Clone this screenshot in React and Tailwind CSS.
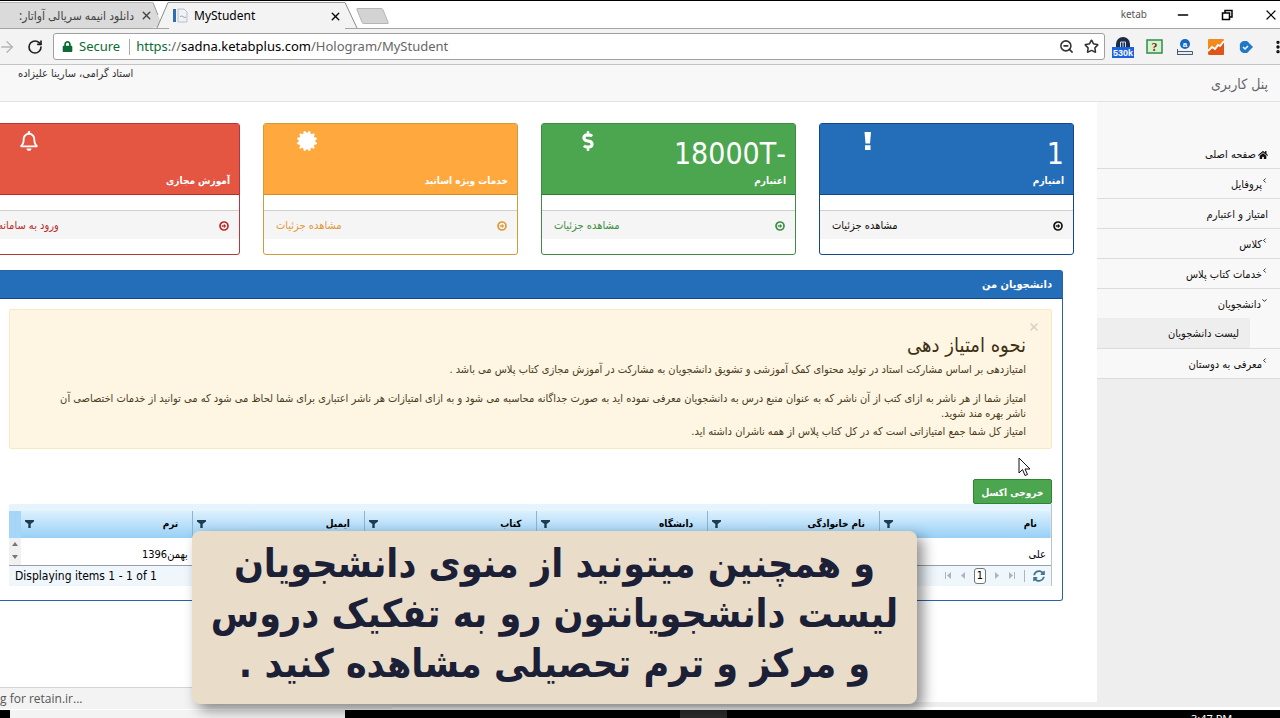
import { useState } from "react";
import { FaCertificate, FaDollarSign, FaHome, FaLock, FaRegBell, FaSyncAlt } from "react-icons/fa";
import { ArrowRight, ChevronDown, ChevronLeft, EllipsisVertical, Minus, RotateCw, Star, X, ZoomOut } from "lucide-react";

function Exclamation({ className }) {
  return (
    <svg width="20" height="20" viewBox="0 0 20 20" fill="currentColor" className={className}>
      <path d="M6.500 1h6.500l-1 11.500h-4.500z M7 14.200h5.500v4.800H7z" />
    </svg>
  );
}

function CircleArrow() {
  return (
    <svg width="10" height="10" viewBox="0 0 10 10" fill="none" stroke="currentColor">
      <circle cx="5" cy="5" r="4" strokeWidth="1.700" />
      <path d="M2.800 5h2" strokeWidth="1.500" />
      <path d="M4.800 2.800L7.200 5 4.800 7.200z" fill="currentColor" stroke="none" />
    </svg>
  );
}

const cards = [
  {
    value: "1",
    title: "امتیازم",
    link: "مشاهده جزئیات",
    icon: Exclamation,
    head: "bg-[#246eb9] border-[#12498b] pl-[38px]",
    box: "border-[#12498b]",
    text: "text-[#111111]",
  },
  {
    value: "-18000T",
    title: "اعتبارم",
    link: "مشاهده جزئیات",
    icon: FaDollarSign,
    head: "bg-[#4ca64f] border-[#2c7d32] pl-[36px]",
    box: "border-[#3d8c42]",
    text: "text-[#3b8f3f]",
  },
  {
    value: "",
    title: "خدمات ویژه اساتید",
    link: "مشاهده جزئیات",
    icon: FaCertificate,
    head: "bg-[#fea83e] border-[#dc8a1c] pl-[33px]",
    box: "border-[#cf9c3c]",
    text: "text-[#e09a3a]",
  },
  {
    value: "",
    title: "آموزش مجازی",
    link: "ورود به سامانه",
    icon: FaRegBell,
    head: "bg-[#e45542] border-[#c22a20] pl-[33px]",
    box: "border-[#b8383a]",
    text: "text-[#b92a26]",
  },
];

const columns = ["نام", "نام خانوادگی", "دانشگاه", "کتاب", "ایمیل", "ترم"];
const student = ["علی", "", "", "", "", "بهمن1396"];

function TabStrip() {
  return (
    <div className="flex h-[29px] items-end border-t border-black border-b border-b-[#a5a5a5] bg-white">
      <div className="flex h-[26px] w-[153px] items-center justify-end gap-[6px] border-t border-[#b5b5b5] bg-[#dadada]">
        <span dir="rtl" className="whitespace-nowrap text-[12px] text-[#444]">
          دانلود انیمه سریالی آواتار:
        </span>
        <button type="button" aria-label="Close tab">
          <X size={13} strokeWidth={2.500} className="text-[#444]" />
        </button>
      </div>
      <svg width="16" height="26" viewBox="0 0 16 26">
        <path d="M0 0.5 L10 25.5 H0 Z" fill="#dadada" />
        <path d="M0 0.5 L5 13" stroke="#999" fill="none" />
        <path d="M4 26 L15 0.5 H16 V26 Z" fill="#f3f3f3" />
        <path d="M4 26 L15 0.5 H16" stroke="#8a8a8a" fill="none" />
      </svg>
      <div className="-mb-px flex h-[27px] w-[176px] items-center border-t border-[#999] bg-[#f3f3f3] pr-[3px]">
        <svg width="16" height="16" viewBox="0 0 16 16" className="ml-[4px]">
          <rect x="0" y="1" width="3" height="13" fill="#2f6fb0" />
          <path d="M5 1h6l3 3v10H5z" fill="#eef1f5" stroke="#b8c0cb" />
          <path d="M7 9c2-3 4 2 6 0" stroke="#8ea0b4" fill="none" />
        </svg>
        <span className="ml-[5px] grow text-[12px] text-black">MyStudent</span>
        <button type="button" aria-label="Close tab">
          <X size={13} strokeWidth={2.500} className="text-black" />
        </button>
      </div>
      <svg width="14" height="26" viewBox="0 0 14 26">
        <path d="M0 0.5 L12 26 H0 Z" fill="#f3f3f3" />
        <path d="M0 0.5 L12 26" stroke="#8a8a8a" fill="none" />
      </svg>
      <button
        type="button"
        aria-label="New tab"
        className="mb-[4px] h-[16px] w-[27px] skew-x-[22deg] rounded-[2px] border border-[#b5b5b5] bg-[#d3d3d3]"
      />
      <div className="flex h-[27px] grow items-center justify-end gap-[28px] pr-[2px]">
        <span className="text-[10px] text-[#555]">ketab</span>
        <button type="button" aria-label="Minimize">
          <Minus size={16} strokeWidth={2} />
        </button>
        <button type="button" aria-label="Restore">
          <svg width="16" height="16" viewBox="0 0 16 16" fill="none" stroke="#000" strokeWidth="1.5">
            <path d="M3.5 6h7v6.500h-7z M6 6V3.500h7V10h-2.500" />
          </svg>
        </button>
        <button type="button" aria-label="Close" className="-mr-[1px]">
          <X size={16} strokeWidth={1.800} />
        </button>
      </div>
    </div>
  );
}

function Toolbar() {
  return (
    <div className="flex h-[36px] items-center border-b border-[#c4c4c4] bg-[#f3f3f3]">
      <button type="button" aria-label="Forward" className="-ml-[2px] text-[#b5b5b5]">
        <ArrowRight size={18} strokeWidth={1.800} />
      </button>
      <button type="button" aria-label="Reload" className="ml-[11px]">
        <RotateCw size={16} strokeWidth={2.500} className="text-[#222]" />
      </button>
      <div className="ml-[10px] flex h-[27px] grow items-center rounded-[3px] border border-[#a0a0a0] bg-white px-[8px] text-[13px]">
        <FaLock size={11} className="text-[#0b6b33]" />
        <span className="ml-[6px] text-[#0b6b33]">Secure</span>
        <span className="mr-[6px] ml-[9px] h-[16px] w-px bg-[#aaa]" />
        <span className="grow whitespace-nowrap text-[#666]">
          <span className="text-[#0b6b33]">https</span>://
          <span className="text-black">sadna.ketabplus.com</span>/Hologram/MyStudent
        </span>
        <button type="button" aria-label="Zoom">
          <ZoomOut size={15} strokeWidth={2.500} className="text-[#333]" />
        </button>
        <button type="button" aria-label="Bookmark" className="-mr-[3px] ml-[10px]">
          <Star size={15} strokeWidth={2.500} className="text-[#333]" />
        </button>
      </div>
      <div className="flex items-center gap-[12px] pl-[7px]">
        <svg width="22" height="22" viewBox="0 0 22 22">
          <path d="M4 11V8a7 7 0 0 1 14 0v3z" fill="#1c2c46" />
          <path d="M8.500 11V6h5v5 M11 6v5" stroke="#cfd8e6" fill="none" />
          <rect x="0" y="11" width="22" height="11" fill="#1b63de" />
          <text x="11" y="20" fontSize="9" fill="#fff" textAnchor="middle" fontWeight="bold" fontFamily="Liberation Sans, sans-serif">
            530k
          </text>
        </svg>
        <svg width="17" height="15" viewBox="0 0 17 15">
          <rect x="1" y="1" width="15" height="13" fill="#d6f3cf" stroke="#2f8d4b" strokeWidth="1.500" />
          <text x="8.500" y="12" fontSize="12" fill="#7b2a1a" textAnchor="middle" fontWeight="bold" fontFamily="Liberation Serif, serif">
            ?
          </text>
        </svg>
        <svg width="18" height="18" viewBox="0 0 18 18" className="ml-[1px]">
          <circle cx="9" cy="6" r="5" fill="#1667c1" />
          <text x="9" y="9" fontSize="8" fill="#fff" textAnchor="middle" fontWeight="bold" fontFamily="Liberation Sans, sans-serif">
            a
          </text>
          <path d="M1.500 11v6 M1.500 13.500h15v3h-15" stroke="#4a5a70" fill="#e8edf3" />
        </svg>
        <svg width="16" height="16" viewBox="0 0 16 16" className="ml-[2px]">
          <rect width="16" height="16" rx="1" fill="#f28a1c" />
          <path d="M0 13l4-4 3 2 4-4 5-5v13a1 1 0 0 1-1 1H1z" fill="#e2531b" />
          <path d="M0 12l4-4 3 2 3-4 2 1 4-5" stroke="#fff" strokeWidth="1.800" fill="none" />
        </svg>
        <svg width="15" height="12" viewBox="0 0 15 12" className="ml-[3px]">
          <path d="M1 6a5 5 0 0 1 9-4l4 4-4 4a5 5 0 0 1-9-4z" fill="#1f78c8" />
          <path d="M4 6l2 2 3-3" stroke="#fff" strokeWidth="1.500" fill="none" />
        </svg>
        <button type="button" aria-label="Menu" className="-mr-[6px] ml-[4px]">
          <EllipsisVertical size={16} strokeWidth={3} />
        </button>
      </div>
    </div>
  );
}

function SideItem({ children, icon }) {
  return (
    <li className="border-b border-[#dcdcdc] bg-[#f8f8f8]">
      <a href="#" className="flex h-[29px] items-center pt-[3px] pr-[12px]">
        {icon}
        <span>{children}</span>
      </a>
    </li>
  );
}

function Sidebar() {
  const left = <ChevronLeft size={7} strokeWidth={3} className="-ml-[1px] mb-[9px]" />;
  return (
    <nav dir="rtl" className="w-[183px] shrink-0 bg-[#eeeeee] text-[11px] text-[#111]">
      <ul className="bg-[#f8f8f8] pt-[37px]">
        <SideItem icon={<FaHome size={10} className="ml-[2px]" />}>صفحه اصلی</SideItem>
        <SideItem icon={left}>پروفایل</SideItem>
        <SideItem>امتیاز و اعتبارم</SideItem>
        <SideItem icon={left}>کلاس</SideItem>
        <SideItem icon={left}>خدمات کتاب پلاس</SideItem>
        <li className="border-b border-[#dcdcdc] bg-[#f8f8f8]">
          <a href="#" className="flex h-[29px] items-center pt-[3px] pr-[12px]">
            <ChevronDown size={7} strokeWidth={3} className="mb-[9px]" />
            <span>دانشجویان</span>
          </a>
          <a href="#" className="mr-[30px] flex h-[30px] items-center bg-[#eeeeee] pt-[2px] pr-[11px]">
            لیست دانشجویان
          </a>
        </li>
        <SideItem icon={left}>معرفی به دوستان</SideItem>
      </ul>
    </nav>
  );
}

function Card({ card }) {
  const Icon = card.icon;
  return (
    <div className={`rounded-[3px] border bg-white ${card.box}`}>
      <div className={`flex h-[71px] justify-between border-b pr-[9px] text-white ${card.head}`}>
        <div className="flex flex-col justify-end pb-[4px]">
          <span className="text-[30px] leading-[36px]">{card.value}</span>
          <span className="text-[10px] leading-[18px] font-bold">{card.title}</span>
        </div>
        <Icon size={20} className="mt-[7px]" />
      </div>
      <div className="py-[15px]">
        <a
          href="#"
          className={`flex h-[29px] items-center justify-between border-t border-[#d0d0d0] bg-[#f5f5f5] pt-[2px] pr-[10px] pl-[12px] text-[11px] ${card.text}`}
        >
          <CircleArrow />
          <span>{card.link}</span>
        </a>
      </div>
    </div>
  );
}

function Notice({ onClose }) {
  return (
    <div className="h-[140px] rounded-[2px] border border-[#f8e8c4] bg-[#fff5e3] pr-[25px] pl-[20px] text-[11px] leading-[15px] text-[#4a3d22]">
      <div className="-mr-[14px] flex h-[25px] items-end">
        <button type="button" aria-label="Close" onClick={onClose}>
          <X size={12} strokeWidth={3} className="mb-[2px] text-[#d8d0c0]" />
        </button>
      </div>
      <h4 className="text-[20px] leading-[21px] text-[#3d3115]">نحوه امتیاز دهی</h4>
      <p className="mt-[6px]">
        امتیازدهی بر اساس مشارکت استاد در تولید محتوای کمک آموزشی و تشویق دانشجویان به مشارکت در آموزش مجازی کتاب پلاس می باشد .
      </p>
      <p className="mt-[14px]">
        امتیاز شما از هر ناشر به ازای کتب از آن ناشر که به عنوان منبع درس به دانشجویان معرفی نموده اید به صورت جداگانه محاسبه می شود و به ازای امتیازات هر ناشر اعتباری برای شما لحاظ می شود که می توانید از خدمات اختصاصی آن
        <br />
        ناشر بهره مند شوید.
      </p>
      <p className="mt-[3px]">امتیاز کل شما جمع امتیازاتی است که در کل کتاب پلاس از همه ناشران داشته اید.</p>
    </div>
  );
}

function PagerButton({ label, path }) {
  return (
    <button type="button" aria-label={label}>
      <svg width="7" height="7" viewBox="0 0 7 7" fill="#a9b5c0">
        <path d={path} />
      </svg>
    </button>
  );
}

function StudentGrid() {
  return (
    <div className="border-r border-[#b9c3d0] bg-gradient-to-b from-[#e6f4fe] to-[#d5ecfc] pt-[7px]">
      <table className="w-full table-fixed border-collapse">
        <thead className="bg-gradient-to-b from-[#dcf0fd] to-[#97d0f6]">
          <tr className="h-[27px]">
            {columns.map((name, i) => (
              <th key={name} className={i < 5 ? "border-l border-[#8fb3cc] p-0" : "p-0"}>
                <div className="flex items-center justify-between pr-[14px] pb-[2px] pl-[4px] text-[10px]">
                  <span>{name}</span>
                  <button type="button" aria-label="Filter">
                    <svg width="9" height="9" viewBox="0 0 9 9" fill="#1d3d50">
                      <path d="M0 1h9v1.500L5.700 5v4H3.300V5L0 2.500z" />
                    </svg>
                  </button>
                </div>
              </th>
            ))}
            <th className="w-[12px] bg-[#a6d6f7] p-0" />
          </tr>
        </thead>
        <tbody className="bg-white">
          <tr className="h-[27px] border-b border-[#999fa8]">
            {student.map((cell, i) => (
              <td key={i} className="p-0 pt-[8px] pr-[5px] text-[11px] leading-[16px]">{cell}</td>
            ))}
            <td className="bg-[#f1f1f1] p-0">
              <svg width="12" height="22" viewBox="0 0 12 22" fill="#777" className="block">
                <path d="M3 6l3-4 3 4z M3 15l3 4 3-4z" />
              </svg>
            </td>
          </tr>
        </tbody>
      </table>
      <div className="flex h-[20px] items-center justify-between bg-[#eff7fd] pr-[6px] pl-[6px]">
        <div className="flex items-center gap-[8px]">
          <button type="button" aria-label="Refresh" className="border-l border-[#a9b5c0] pl-[8px]">
            <FaSyncAlt size={12} className="text-[#41758a]" />
          </button>
          <PagerButton label="Last page" path="M0 0l4 3.500-4 3.500z M5 0h1v7H5z" />
          <PagerButton label="Next page" path="M1 0l4 3.500-4 3.500z" />
          <button type="button" className="h-[16px] w-[12px] rounded-[3px] border border-[#777] bg-white text-[11px] leading-[14px] text-black">
            1
          </button>
          <PagerButton label="Previous page" path="M6 0L2 3.500 6 7z" />
          <PagerButton label="First page" path="M7 0L3 3.500 7 7z M1 0h1v7H1z" />
        </div>
        <span dir="ltr" className="text-[12px] leading-[16px] text-black">Displaying items 1 - 1 of 1</span>
      </div>
    </div>
  );
}

function App() {
  const [showNotice, setShowNotice] = useState(true);

  return (
    <div className="relative flex h-screen w-full flex-col overflow-hidden bg-white font-['Noto_Sans','DejaVu_Sans_Condensed',sans-serif]">
      <TabStrip />
      <Toolbar />
      <div className="flex grow flex-col overflow-hidden font-['DejaVu_Sans_Condensed','DejaVu_Sans',sans-serif]">
        <header dir="rtl" className="flex h-[37px] shrink-0 justify-between border-b border-[#e3e3e3] bg-[#f8f8f8] pr-[12px] pl-[18px]">
          <h1 className="pt-[8px] text-[14px] leading-[22px] text-[#666]">پنل کاربری</h1>
          <span className="text-[11px] leading-[18px] text-[#333]">استاد گرامی، سارینا علیزاده</span>
        </header>
        <div dir="rtl" className="flex grow">
          <Sidebar />
          <main className="min-w-0 grow overflow-hidden pt-[21px]">
            <div className="mr-[23px] -ml-[15px] grid grid-cols-4 gap-[23px]">
              {cards.map((card) => (
                <Card key={card.title} card={card} />
              ))}
            </div>
            <section className="mt-[15px] mr-[34px] rounded-r-[3px] border border-l-0 border-[#2a62a8] pb-[14px]">
              <h2 className="flex h-[28px] items-center border-b border-[#12498b] bg-[#246eb9] pt-[2px] pr-[10px] text-[11px] font-bold text-white">
                دانشجویان من
              </h2>
              <div className="pt-[10px] pr-[10px] pl-[9px]">
                {showNotice && <Notice onClose={() => setShowNotice(false)} />}
                <button
                  type="button"
                  className="mt-[30px] block h-[25px] w-[79px] rounded-[2px] border border-[#2f8435] bg-[#4ca64f] pt-[2px] text-[10px] font-bold text-white"
                >
                  خروجی اکسل
                </button>
                <StudentGrid />
              </div>
            </section>
          </main>
        </div>
        <div className="h-[8px] shrink-0 border-b-[3px] border-white bg-[#eeeeee]" />
      </div>
      <footer className="flex h-[8px] shrink-0 bg-black pl-[10px]">
        <div className="w-[335px] bg-[#f3f3f3]" />
        <div className="ml-[335px] w-[47px] bg-[#2c2c2c]" />
        <span className="ml-[464px] h-[8px] overflow-hidden pt-[3px] text-[11px] leading-[12px] text-white">3:47 PM</span>
      </footer>

      <div className="absolute bottom-[9px] left-0 h-[22px] w-[392px] overflow-hidden border-t border-[#d4d4d4] bg-[#f3f3f3] text-[12px] leading-[22px] whitespace-nowrap text-[#555] font-['Open_Sans',sans-serif]">
        g for retain.ir...
      </div>

      <div
        dir="rtl"
        className="absolute top-[531px] left-[192px] flex h-[173px] w-[725px] flex-col items-center justify-center rounded-[8px] bg-[#e9ddca] pb-[8px] text-center font-['DejaVu_Sans_Condensed',sans-serif] text-[39px] leading-[50px] font-bold whitespace-nowrap text-[#1b2036] shadow-[6px_6px_14px_rgba(0,0,0,0.45)]"
      >
        <p>و همچنین میتونید از منوی دانشجویان</p>
        <p>لیست دانشجویانتون رو به تفکیک دروس</p>
        <p>و مرکز و ترم تحصیلی مشاهده کنید .</p>
      </div>

      <svg className="absolute top-[457px] left-[1018px]" width="13" height="20" viewBox="0 0 13 20">
        <path d="M1 1v15l3.500-3.500L7 18.500l2.500-1L7 12h5z" fill="#fff" stroke="#111" />
      </svg>
    </div>
  );
}

export default App;
